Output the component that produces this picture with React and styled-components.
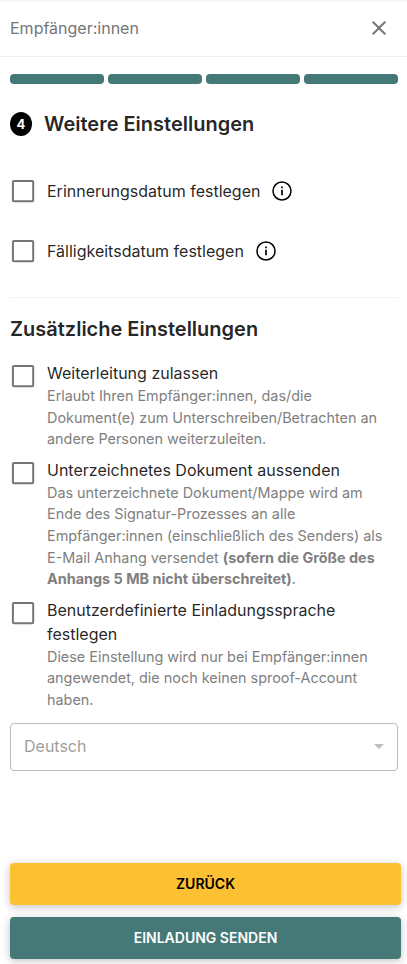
import React from "react";
import styled, { createGlobalStyle, css } from "styled-components";

const GlobalStyle = createGlobalStyle`
  *, *::before, *::after { box-sizing: border-box; }
  body {
    margin: 0;
    background: #fff;
    color: rgba(0, 0, 0, 0.87);
    font-family: Inter, "Liberation Sans", sans-serif;
    font-size: 16px;
    line-height: 24px;
  }
`;

const Dialog = styled.main`
  display: flex;
  flex-direction: column;
  height: 964px;
  overflow: hidden;
  border-top: 2px solid #f6f6fb;
`;

const Header = styled.header`
  display: flex;
  align-items: center;
  justify-content: space-between;
  height: 55px;
  padding: 0 16px 2px 10px;
  border-bottom: 1px solid #efeff4;
  color: #757575;
`;

const CloseButton = styled.button`
  display: flex;
  padding: 0;
  border: 0;
  background: none;
  color: #757575;
  cursor: pointer;
`;

const Icon = styled.svg`
  display: block;
  flex: none;
  width: ${({ $size }) => $size || 24}px;
  height: ${({ $size }) => $size || 24}px;
  fill: currentColor;
`;

const Content = styled.div`
  display: flex;
  flex-direction: column;
  flex: 1;
  padding: 17px 9px 0 10px;
`;

const Progress = styled.div`
  display: grid;
  grid-template-columns: repeat(4, 1fr);
  gap: 4px;
`;

const Segment = styled.span`
  height: 10px;
  border-radius: 4px;
  background: #457978;
`;

const StepHeading = styled.div`
  display: flex;
  align-items: center;
  gap: 12px;
  height: 32px;
  margin-top: 24px;
`;

const StepNumber = styled.span`
  display: flex;
  align-items: center;
  justify-content: center;
  width: 22px;
  height: 24px;
  border-radius: 50%;
  background: #000;
  color: #fff;
  font-size: 13px;
  font-weight: 700;
`;

const Title = styled.h2`
  margin: 0;
  font-size: 20px;
  font-weight: 600;
  line-height: 32px;
`;

const DateOptions = styled.div`
  display: flex;
  flex-direction: column;
  padding: 21px 0 16px;
  border-bottom: 1px solid #f0f0f0;
`;

const DateOption = styled.div`
  display: flex;
  align-items: center;
  height: 60px;
`;

const CheckLabel = styled.label`
  display: flex;
  align-items: center;
  gap: 9px;
  margin-left: -2px;
`;

const InfoButton = styled.span`
  display: flex;
  margin-left: 10px;
  color: #000;
`;

const CheckIcon = styled(Icon)`
  color: #757575;
`;

const SectionTitle = styled(Title)`
  margin-top: 15px;
`;

const Options = styled.div`
  display: flex;
  flex-direction: column;
  gap: 8px;
  margin-top: 16px;
`;

const Option = styled.div`
  display: flex;
  align-items: flex-start;
  gap: 9px;
  margin-left: -2px;
`;

const OptionText = styled.div`
  flex: 1;
`;

const Label = styled.div`
  line-height: 24px;
`;

const Hint = styled.p`
  margin: 0;
  color: #808080;
  font-size: 14.4px;
  line-height: 21.6px;
`;

const Select = styled.div`
  display: flex;
  align-items: center;
  justify-content: space-between;
  height: 48px;
  margin-top: 12px;
  padding: 0 6px 1px 13px;
  border: 1px solid #bdbdbd;
  border-radius: 4px;
  color: #9e9e9e;
`;

const Arrow = styled(Icon)`
  color: #bdbdbd;
`;

const Actions = styled.footer`
  display: flex;
  flex-direction: column;
  gap: 12px;
  padding: 0 6px 5px 10px;
`;

const Button = styled.button`
  height: 42px;
  border: 0;
  border-radius: 4px;
  font: 600 14px/24px Inter, "Liberation Sans", sans-serif;
  text-transform: uppercase;
  cursor: pointer;
  box-shadow: 0 2px 8px rgba(0, 0, 0, 0.24);
  ${({ $primary }) =>
    $primary
      ? css`background: #457978; color: #fff;`
      : css`background: #fcc133; color: #000;`}
`;

const Checkbox = () => (
  <CheckIcon viewBox="0 0 30 30" $size={30} role="checkbox" aria-checked="false">
    <rect x="4.9" y="4.9" width="20.3" height="20.3" rx="1" fill="none" stroke="currentColor" strokeWidth="2" />
  </CheckIcon>
);

const InfoIcon = () => (
  <Icon viewBox="0 0 24 24">
    <circle cx="12" cy="12" r="9" fill="none" stroke="currentColor" strokeWidth="1.5" />
    <path d="M11.15 7.6h1.7v1.6h-1.7zM11.15 10.8h1.7v5.4h-1.7z" />
  </Icon>
);

const dates = ["Erinnerungsdatum festlegen", "Fälligkeitsdatum festlegen"];

const options = [
  {
    label: "Weiterleitung zulassen",
    hint: "Erlaubt Ihren Empfänger:innen, das/die Dokument(e) zum Unterschreiben/Betrachten an andere Personen weiterzuleiten.",
  },
  {
    label: "Unterzeichnetes Dokument aussenden",
    hint: (
      <>
        Das unterzeichnete Dokument/Mappe wird am Ende des Signatur-Prozesses an alle
        Empfänger:innen (einschließlich des Senders) als E-Mail Anhang versendet{" "}
        <b>(sofern die Größe des Anhangs 5 MB nicht überschreitet)</b>.
      </>
    ),
  },
  {
    label: "Benutzerdefinierte Einladungssprache festlegen",
    hint: "Diese Einstellung wird nur bei Empfänger:innen angewendet, die noch keinen sproof-Account haben.",
  },
];

export default function App() {
  return (
    <>
      <GlobalStyle />
      <Dialog>
        <Header>
          Empfänger:innen
          <CloseButton aria-label="Schließen">
            <Icon viewBox="0 0 24 24">
              <path d="M19 6.41L17.59 5 12 10.59 6.41 5 5 6.41 10.59 12 5 17.59 6.41 19 12 13.41 17.59 19 19 17.59 13.41 12z" />
            </Icon>
          </CloseButton>
        </Header>
        <Content>
          <Progress>
            {[1, 2, 3, 4].map((n) => <Segment key={n} />)}
          </Progress>
          <StepHeading>
            <StepNumber>4</StepNumber>
            <Title>Weitere Einstellungen</Title>
          </StepHeading>
          <DateOptions>
            {dates.map((label) => (
              <DateOption key={label}>
                <CheckLabel>
                  <Checkbox />
                  <Label>{label}</Label>
                </CheckLabel>
                <InfoButton><InfoIcon /></InfoButton>
              </DateOption>
            ))}
          </DateOptions>
          <SectionTitle>Zusätzliche Einstellungen</SectionTitle>
          <Options>
            {options.map(({ label, hint }) => (
              <Option key={label}>
                <Checkbox />
                <OptionText>
                  <Label>{label}</Label>
                  <Hint>{hint}</Hint>
                </OptionText>
              </Option>
            ))}
          </Options>
          <Select>
            Deutsch
            <Arrow viewBox="0 0 24 24"><path d="M7 10l5 5 5-5z" /></Arrow>
          </Select>
        </Content>
        <Actions>
          <Button>Zurück</Button>
          <Button $primary>Einladung senden</Button>
        </Actions>
      </Dialog>
    </>
  );
}
